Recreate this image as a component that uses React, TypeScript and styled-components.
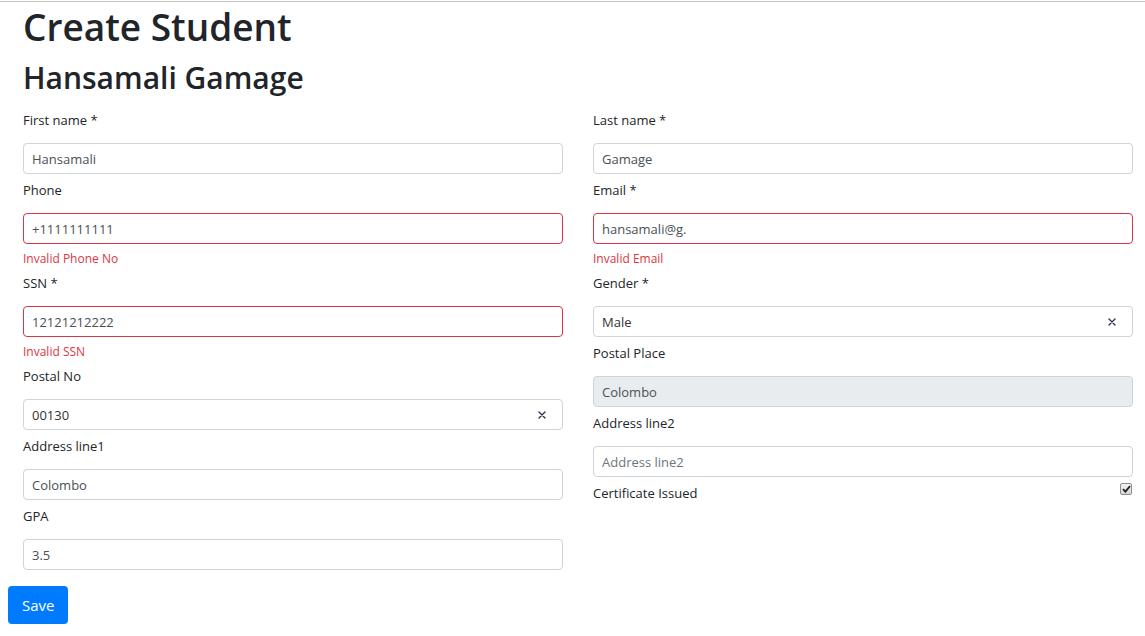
import React from "react";
import styled, { createGlobalStyle, css } from "styled-components";

const GlobalStyle = createGlobalStyle`
  html, body {
    margin: 0;
    padding: 0;
    background: #ffffff;
  }
  body {
    padding-top: 1px;
    font-family: "Open Sans", "Noto Sans", sans-serif;
    color: #212529;
  }
  * { box-sizing: border-box; }
`;

const Page = styled.div`
  border-top: 1px solid #c4c4c4;
  padding: 0 8px 12px 8px;
`;

const Content = styled.div`
  padding: 0 15px;
`;

const Title = styled.h1`
  margin: 2px 0 0 0;
  font-size: 37px;
  line-height: 46px;
  font-weight: 600;
  color: #212529;
`;

const Subtitle = styled.h2`
  margin: 9px 0 0 0;
  font-size: 30px;
  line-height: 38px;
  font-weight: 600;
  color: #212529;
`;

const Columns = styled.div`
  margin-top: 7px;
  display: grid;
  grid-template-columns: 540px 540px;
  column-gap: 30px;
  align-items: start;
`;

const Column = styled.div`
  display: flex;
  flex-direction: column;
`;

const Field = styled.div`
  display: flex;
  flex-direction: column;
`;

const Label = styled.label`
  display: block;
  font-size: 13px;
  line-height: 20px;
  padding-top: 6px;
  margin-bottom: 13px;
  color: #212529;
`;

const boxBase = css`
  height: 31px;
  width: 100%;
  border-radius: 4px;
  font-family: "Open Sans", "Noto Sans", sans-serif;
  font-size: 13px;
  padding: 0 8px;
`;

const Input = styled.input<{ $invalid?: boolean }>`
  ${boxBase};
  display: block;
  border: 1px solid ${(p) => (p.$invalid ? "#dc3545" : "#ced4da")};
  color: #495057;
  background: #ffffff;
  outline: none;
  &::placeholder {
    color: #6c757d;
    opacity: 1;
  }
  &:disabled {
    background: #e9ecef;
    color: #495057;
  }
`;

const SelectBox = styled.div`
  ${boxBase};
  display: flex;
  align-items: center;
  justify-content: space-between;
  padding-right: 16px;
  border: 1px solid #ced4da;
  background: #ffffff;
  color: #333333;
`;

const ClearIcon = styled.svg`
  width: 8px;
  height: 8px;
  flex: none;
`;

const ErrorText = styled.div`
  margin-top: 6px;
  margin-bottom: -1px;
  font-size: 12px;
  line-height: 18px;
  color: #dc3545;
`;

const CheckRow = styled.div`
  display: flex;
  justify-content: space-between;
  align-items: flex-start;
`;

const CheckBox = styled.span`
  margin-top: 6px;
  margin-right: 1px;
  width: 12px;
  height: 12px;
  border: 1px solid #8d8d8d;
  border-radius: 2px;
  background: linear-gradient(#f3f3f3, #d6d6d6);
  display: flex;
  align-items: center;
  justify-content: center;
`;

const SaveButton = styled.button`
  margin-top: 16px;
  height: 38px;
  padding: 0 14px;
  border: none;
  border-radius: 4px;
  background: #007bff;
  color: #ffffff;
  font-family: "Open Sans", "Noto Sans", sans-serif;
  font-size: 15px;
  cursor: pointer;
`;

const Clear = () => (
  <ClearIcon viewBox="0 0 8 8">
    <path d="M1 1 L7 7 M7 1 L1 7" stroke="#2b2b45" strokeWidth="1.3" strokeLinecap="round" />
  </ClearIcon>
);

type FieldProps = {
  label: string;
  value?: string;
  placeholder?: string;
  error?: string;
  disabled?: boolean;
};

const TextField = ({ label, value, placeholder, error, disabled }: FieldProps) => (
  <Field>
    <Label>{label}</Label>
    <Input
      defaultValue={value}
      placeholder={placeholder}
      $invalid={!!error}
      disabled={disabled}
    />
    {error && <ErrorText>{error}</ErrorText>}
  </Field>
);

const SelectField = ({ label, value }: { label: string; value: string }) => (
  <Field>
    <Label>{label}</Label>
    <SelectBox>
      <span>{value}</span>
      <Clear />
    </SelectBox>
  </Field>
);

export default function App() {
  return (
    <>
      <GlobalStyle />
      <Page>
        <Content>
          <Title>Create Student</Title>
          <Subtitle>Hansamali Gamage</Subtitle>
          <Columns>
            <Column>
              <TextField label="First name *" value="Hansamali" />
              <TextField label="Phone" value="+1111111111" error="Invalid Phone No" />
              <TextField label="SSN *" value="12121212222" error="Invalid SSN" />
              <SelectField label="Postal No" value="00130" />
              <TextField label="Address line1" value="Colombo" />
              <TextField label="GPA" value="3.5" />
            </Column>
            <Column>
              <TextField label="Last name *" value="Gamage" />
              <TextField label="Email *" value="hansamali@g." error="Invalid Email" />
              <SelectField label="Gender *" value="Male" />
              <TextField label="Postal Place" value="Colombo" disabled />
              <TextField label="Address line2" placeholder="Address line2" />
              <CheckRow>
                <Label>Certificate Issued</Label>
                <CheckBox>
                  <svg width="9" height="8" viewBox="0 0 9 8">
                    <path d="M1 4.2 L3.4 6.6 L8 1.2" stroke="#222" strokeWidth="1.8" fill="none" />
                  </svg>
                </CheckBox>
              </CheckRow>
            </Column>
          </Columns>
        </Content>
        <SaveButton>Save</SaveButton>
      </Page>
    </>
  );
}
